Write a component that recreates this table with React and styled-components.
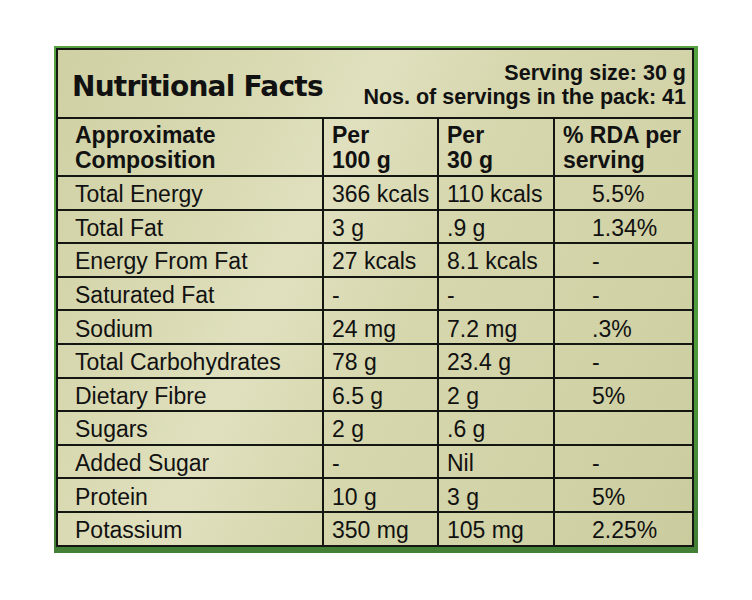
import React from "react";
import styled, { createGlobalStyle } from "styled-components";

const GlobalStyle = createGlobalStyle`
  body {
    margin: 0;
    background: #ffffff;
    font-family: "Liberation Sans", Arial, sans-serif;
  }
`;

const rows = [
  ["Total Energy", "366 kcals", "110 kcals", "5.5%"],
  ["Total Fat", "3 g", ".9 g", "1.34%"],
  ["Energy From Fat", "27 kcals", "8.1 kcals", "-"],
  ["Saturated Fat", "-", "-", "-"],
  ["Sodium", "24 mg", "7.2 mg", ".3%"],
  ["Total Carbohydrates", "78 g", "23.4 g", "-"],
  ["Dietary Fibre", "6.5 g", "2 g", "5%"],
  ["Sugars", "2 g", ".6 g", ""],
  ["Added Sugar", "-", "Nil", "-"],
  ["Protein", "10 g", "3 g", "5%"],
  ["Potassium", "350 mg", "105 mg", "2.25%"],
];

const App = () => {
  return (
    <Page>
      <GlobalStyle />
      <Frame>
        <Label>
          <TitleBar>
            <Title>Nutritional Facts</Title>
            <Serving>
              <div>Serving size: 30 g</div>
              <div>Nos. of servings in the pack: 41</div>
            </Serving>
          </TitleBar>
          <Table>
            <colgroup>
              <col style={{ width: 265 }} />
              <col style={{ width: 115 }} />
              <col style={{ width: 116 }} />
              <col style={{ width: 138 }} />
            </colgroup>
            <thead>
              <tr>
                <HeadCell $first>
                  Approximate
                  <br />
                  Composition
                </HeadCell>
                <HeadCell>
                  Per
                  <br />
                  100 g
                </HeadCell>
                <HeadCell>
                  Per
                  <br />
                  30 g
                </HeadCell>
                <HeadCell>
                  % RDA per
                  <br />
                  serving
                </HeadCell>
              </tr>
            </thead>
            <tbody>
              {rows.map((r) => (
                <tr key={r[0]}>
                  <Cell $first>{r[0]}</Cell>
                  <Cell>{r[1]}</Cell>
                  <Cell>{r[2]}</Cell>
                  <Cell $rda>{r[3]}</Cell>
                </tr>
              ))}
            </tbody>
          </Table>
        </Label>
      </Frame>
    </Page>
  );
};

const Page = styled.div`
  width: 752px;
  height: 600px;
  padding: 46px 0 0 54px;
  box-sizing: border-box;
`;

const Frame = styled.div`
  width: 644px;
  height: 507px;
  box-sizing: border-box;
  padding: 2px 4px 6px 2px;
  background: linear-gradient(180deg, #56a242 0%, #4f9a3d 60%, #437f36 100%);
`;

const Label = styled.div`
  height: 100%;
  box-sizing: border-box;
  border: 2px solid #141612;
  display: flex;
  flex-direction: column;
  overflow: hidden;
  color: #111;
  background: linear-gradient(
    115deg,
    #cfd0a3 0%,
    #d9dab2 25%,
    #e0e0bf 38%,
    #d6d7ad 55%,
    #d1d2a6 80%,
    #cbcc9e 100%
  );
`;

const TitleBar = styled.div`
  height: 67px;
  flex-shrink: 0;
  border-bottom: 2px solid #141612;
  display: flex;
  align-items: center;
  justify-content: space-between;
  padding: 0 6px 0 14px;
`;

const Title = styled.div`
  font-family: "DejaVu Sans", Verdana, sans-serif;
  font-weight: bold;
  font-size: 28px;
  letter-spacing: -0.75px;
  margin-top: 6px;
`;

const Serving = styled.div`
  font-weight: bold;
  font-size: 21.5px;
  line-height: 24px;
  text-align: right;
  margin-top: 2px;
`;

const Table = styled.table`
  width: 100%;
  table-layout: fixed;
  border-collapse: collapse;
  border-style: hidden;
`;

const HeadCell = styled.th`
  height: 54px;
  border: 2px solid #141612;
  text-align: left;
  vertical-align: middle;
  font-size: 23px;
  line-height: 25px;
  font-weight: bold;
  white-space: nowrap;
  padding: 2px 0 0 ${(p) => (p.$first ? "17px" : "8px")};
`;

const Cell = styled.td`
  height: 28.6px;
  border: 2px solid #141612;
  font-size: 23px;
  line-height: 24px;
  white-space: nowrap;
  padding: 3px 0 0
    ${(p) => (p.$first ? "17px" : p.$rda ? "37px" : "8px")};
`;

export default App;
